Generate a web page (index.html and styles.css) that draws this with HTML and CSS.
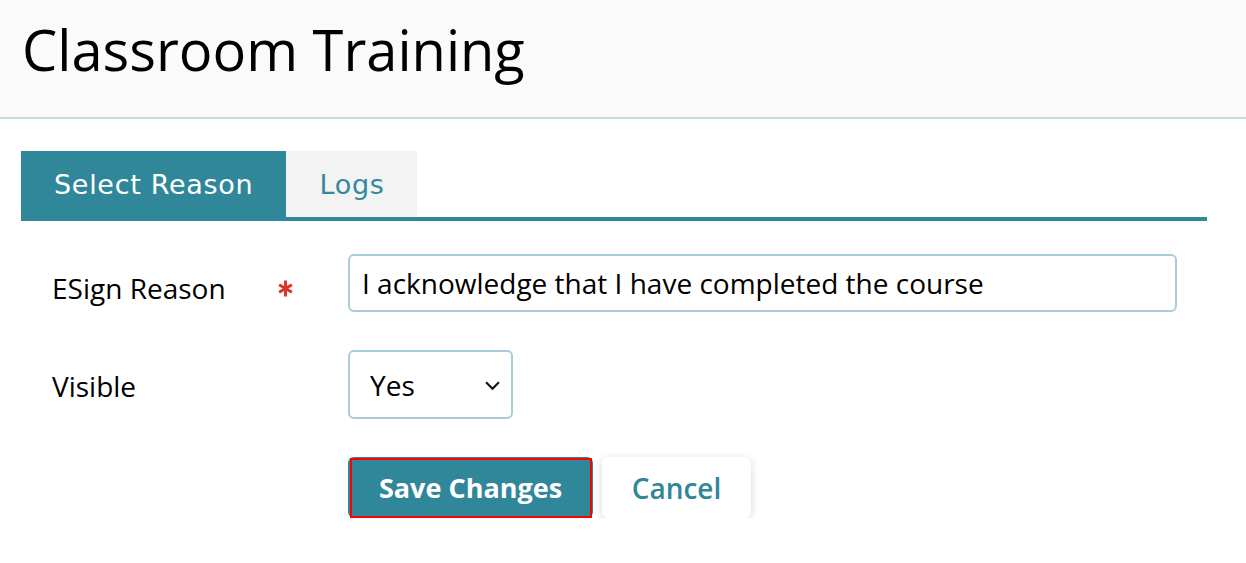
FILE: index.html
```html
<!DOCTYPE html>
<html lang="en">
<head>
  <meta charset="UTF-8" />
  <title>Classroom Training</title>
  <link rel="stylesheet" href="styles.css">
</head>
<body>
  <header class="page-header">
    <h1>Classroom Training</h1>
  </header>

  <main class="content">
    <div class="tabs">
      <div class="tab active">Select Reason</div>
      <div class="tab">Logs</div>
    </div>

    <form class="reason-form">
      <div class="row">
        <div class="label-cell first">
          <label for="reason">ESign Reason</label>
          <svg class="required" viewBox="0 0 14 16" aria-hidden="true">
            <path d="M7 0.5v15M1 4.5l12 7M13 4.5l-12 7" />
          </svg>
        </div>
        <input id="reason" class="text-input" type="text" value="I acknowledge that I have completed the course" />
      </div>

      <div class="row">
        <div class="label-cell">
          <label for="visible">Visible</label>
        </div>
        <span class="select-wrap">
          <select id="visible" class="select-input">
            <option>Yes</option>
            <option>No</option>
          </select>
          <svg class="chevron" viewBox="0 0 14 8" aria-hidden="true">
            <path d="M1 1l6 6 6-6" />
          </svg>
        </span>
      </div>

      <div class="row">
        <div class="label-cell"></div>
        <div class="actions">
          <button type="button" class="btn btn-primary">Save Changes</button>
          <button type="button" class="btn btn-light">Cancel</button>
        </div>
      </div>
    </form>
  </main>
</body>
</html>
```

FILE: styles.css
```css
html, body {
  margin: 0;
  padding: 0;
  background: #fff;
  font-family: 'Open Sans', 'Noto Sans', sans-serif;
  color: #000;
}
.page-header {
  background: #fafafa;
  height: 119px;
  box-sizing: border-box;
  border-bottom: 2px solid #c6dde3;
  padding: 11px 0 0 22px;
}
.page-header h1 {
  margin: 0;
  font-size: 56px;
  font-weight: 400;
  line-height: 76px;
}
.content {
  padding: 32px 39px 0 21px;
}
.tabs {
  display: flex;
  height: 66px;
  border-bottom: 4px solid #31879a;
}
.tab {
  display: flex;
  align-items: center;
  padding: 0 33px;
  font-family: 'DejaVu Sans', sans-serif;
  font-size: 27px;
  letter-spacing: 0.7px;
  color: #3389a0;
  background: #f3f3f3;
}
.tab.active {
  background: #31879a;
  color: #fff;
}
.reason-form {
  display: flex;
  flex-direction: column;
  gap: 38px;
  padding-top: 33px;
}
.row {
  display: flex;
  align-items: center;
}
.label-cell {
  width: 327px;
  box-sizing: border-box;
  padding: 0 55px 0 31px;
  margin-top: 3px;
  display: flex;
  align-items: center;
  font-size: 28px;
  flex-shrink: 0;
}
.label-cell.first {
  margin-top: 9px;
}
.required {
  width: 15px;
  height: 17px;
  margin-left: auto;
  margin-top: 2px;
  stroke: #d9362b;
  stroke-width: 2.8;
  fill: none;
}
.text-input {
  width: 829px;
  height: 58px;
  box-sizing: border-box;
  border: 2px solid #a9ccd5;
  border-radius: 6px;
  padding: 0 12px;
  font-family: 'Open Sans', sans-serif;
  font-size: 28px;
  color: #000;
  outline: none;
}
.select-wrap {
  position: relative;
  display: inline-block;
}
.select-input {
  appearance: none;
  width: 165px;
  height: 69px;
  box-sizing: border-box;
  border: 2px solid #a9ccd5;
  border-radius: 6px;
  background: #fff;
  padding: 0 20px;
  font-family: 'Open Sans', sans-serif;
  font-size: 28px;
  color: #000;
}
.chevron {
  position: absolute;
  right: 13px;
  top: 31px;
  width: 15px;
  height: 9px;
  stroke: #111;
  stroke-width: 2;
  fill: none;
  pointer-events: none;
}
.actions {
  display: flex;
  gap: 9px;
}
.btn {
  height: 61px;
  border: none;
  border-radius: 6px;
  font-family: 'Open Sans', sans-serif;
  font-size: 28px;
  cursor: pointer;
}
.btn-primary {
  position: relative;
  width: 245px;
  background: #31879a;
  color: #fff;
  font-weight: 700;
  font-size: 27px;
}
.btn-primary::after {
  content: "";
  position: absolute;
  left: 2px;
  top: 1px;
  right: 1px;
  bottom: 0;
  border: 2px solid #ff0000;
}
.btn-light {
  width: 149px;
  background: #fff;
  color: #31879a;
  font-weight: 600;
  box-shadow: 0 2px 8px rgba(0, 0, 0, 0.16);
}
```
